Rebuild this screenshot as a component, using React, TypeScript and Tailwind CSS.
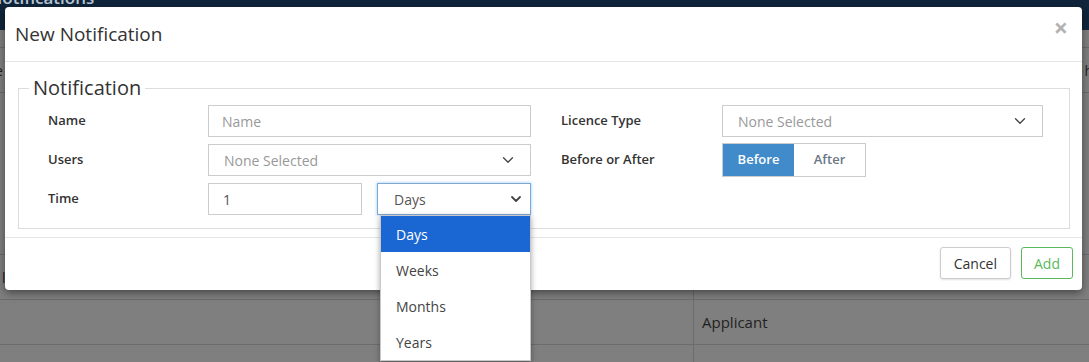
import React from 'react';
import { ChevronDown } from 'lucide-react';

const font = "font-['Open_Sans',sans-serif]";

function Label({ children, w }: { children: React.ReactNode; w: string }) {
  return <div className={`${w} shrink-0 text-[13px] font-semibold text-[#333]`}>{children}</div>;
}

function MultiSelect({ w }: { w: string }) {
  return (
    <div className={`${w} h-[32px] border border-[#ccc] bg-white flex items-center justify-between pl-[15px] pr-[13px]`}>
      <span className="text-[14px] text-[#999]">None Selected</span>
      <ChevronDown size={18} strokeWidth={1.75} className="text-[#444]" />
    </div>
  );
}

const UNITS = ['Days', 'Weeks', 'Months', 'Years'];

export default function App() {
  return (
    <div className={`relative w-[1089px] h-[362px] overflow-hidden bg-[#7f7f7f] ${font}`}>
      {/* page behind the backdrop */}
      <div className="h-[30px] bg-[#10253b] overflow-hidden">
        <div className="-mt-[15px] -ml-[11px] text-[17px] font-semibold text-[#b9c7d6]">Notifications</div>
      </div>
      <div className="text-[14px] text-[#1f1f1f]">
        <div className="h-[18px] border-b border-[#6c6c6c]" />
        <div className="h-[45px] border-b border-[#6c6c6c] flex items-center justify-between">
          <span className="-ml-[5px]">e</span>
          <span className="-mr-[4px]">h</span>
        </div>
        <div className="h-[162px] border-b border-[#6c6c6c]" />
        <div className="h-[45px] border-b border-[#6c6c6c] grid grid-cols-[693px_1fr]">
          <div className="flex items-center"><span className="ml-[2px]">l</span></div>
          <div className="border-l border-[#6c6c6c]" />
        </div>
        <div className="h-[45px] border-b border-[#6c6c6c] grid grid-cols-[693px_1fr]">
          <div />
          <div className="border-l border-[#6c6c6c] flex items-center pl-[8px] text-[15px]">Applicant</div>
        </div>
        <div className="h-[30px] grid grid-cols-[693px_1fr]">
          <div />
          <div className="border-l border-[#6c6c6c]" />
        </div>
      </div>

      {/* modal */}
      <div className="absolute left-[5px] top-[7px] w-[1077px] h-[283px] bg-white rounded-[4px] shadow-[0_3px_8px_rgba(0,0,0,0.45)] flex flex-col">
        <div className="h-[55px] shrink-0 border-b border-[#e5e5e5] flex items-start justify-between pl-[10px] pr-[14px]">
          <h4 className="mt-[14px] text-[19px] leading-[26px] text-[#333]">New Notification</h4>
          <span className="mt-[6px] text-[25px] font-bold leading-[28px] text-[#b3b3b3]">×</span>
        </div>

        <div className="px-[13px] pb-[8px] flex-1">
          <fieldset className="mt-[14px] border border-[#ddd] w-[1052px] pb-[13px]">
            <legend className="ml-[10px] px-[4px] text-[20px] leading-[24px] text-[#333]">Notification</legend>
            <div className="flex gap-[30px] pl-[29px] pt-[5px]">
              <div className="w-[483px] flex flex-col gap-[7px]">
                <div className="h-[32px] flex items-center">
                  <Label w="w-[160px]">Name</Label>
                  <div className="w-[323px] h-[32px] border border-[#ccc] flex items-center pl-[13px] text-[14px] text-[#999]">Name</div>
                </div>
                <div className="h-[32px] flex items-center">
                  <Label w="w-[160px]">Users</Label>
                  <MultiSelect w="w-[323px]" />
                </div>
                <div className="h-[32px] flex items-center">
                  <Label w="w-[160px]">Time</Label>
                  <div className="w-[154px] h-[32px] border border-[#ccc] flex items-center pl-[14px] text-[14px] text-[#555]">1</div>
                  <div className="relative ml-[15px] w-[154px] h-[32px]">
                    <div className="h-full border border-[#7fa9d6] shadow-[0_0_3px_rgba(102,175,233,0.7)] flex items-center justify-between pl-[16px] pr-[6px] text-[14px] text-[#555]">
                      <span>Days</span>
                      <ChevronDown size={16} strokeWidth={2.75} className="text-[#444]" />
                    </div>
                    <div className="absolute z-10 top-full left-[3px] right-0 bg-white border border-[#c8c8c8] shadow-[0_2px_6px_rgba(0,0,0,0.35)]">
                      {UNITS.map((u, i) => (
                        <div
                          key={u}
                          className={`h-[36px] flex items-center pl-[15px] text-[14px] ${i === 0 ? 'bg-[#1a66d2] text-white' : 'text-[#444]'}`}
                        >
                          {u}
                        </div>
                      ))}
                    </div>
                  </div>
                </div>
              </div>

              <div className="w-[482px] flex flex-col gap-[7px]">
                <div className="h-[32px] flex items-center">
                  <Label w="w-[161px]">Licence Type</Label>
                  <MultiSelect w="w-[321px]" />
                </div>
                <div className="h-[32px] flex items-center">
                  <Label w="w-[161px]">Before or After</Label>
                  <div className="h-[34px] flex border border-[#ccc] text-[13px] font-semibold">
                    <div className="w-[71px] bg-[#428bca] text-white flex items-center justify-center">Before</div>
                    <div className="w-[71px] bg-white text-[#6b7785] flex items-center justify-center">After</div>
                  </div>
                </div>
              </div>
            </div>
          </fieldset>
        </div>

        <div className="h-[53px] shrink-0 border-t border-[#e5e5e5] flex items-start justify-end gap-[10px] pt-[9px] pr-[9px]">
          <button className="h-[32px] px-[13px] border border-[#ccc] rounded-[3px] bg-white text-[14px] text-[#333] shadow-[0_1px_2px_rgba(0,0,0,0.12)]">Cancel</button>
          <button className="h-[32px] px-[12px] border border-[#5cb85c] rounded-[3px] bg-white text-[14px] text-[#5cb85c]">Add</button>
        </div>
      </div>
    </div>
  );
}
